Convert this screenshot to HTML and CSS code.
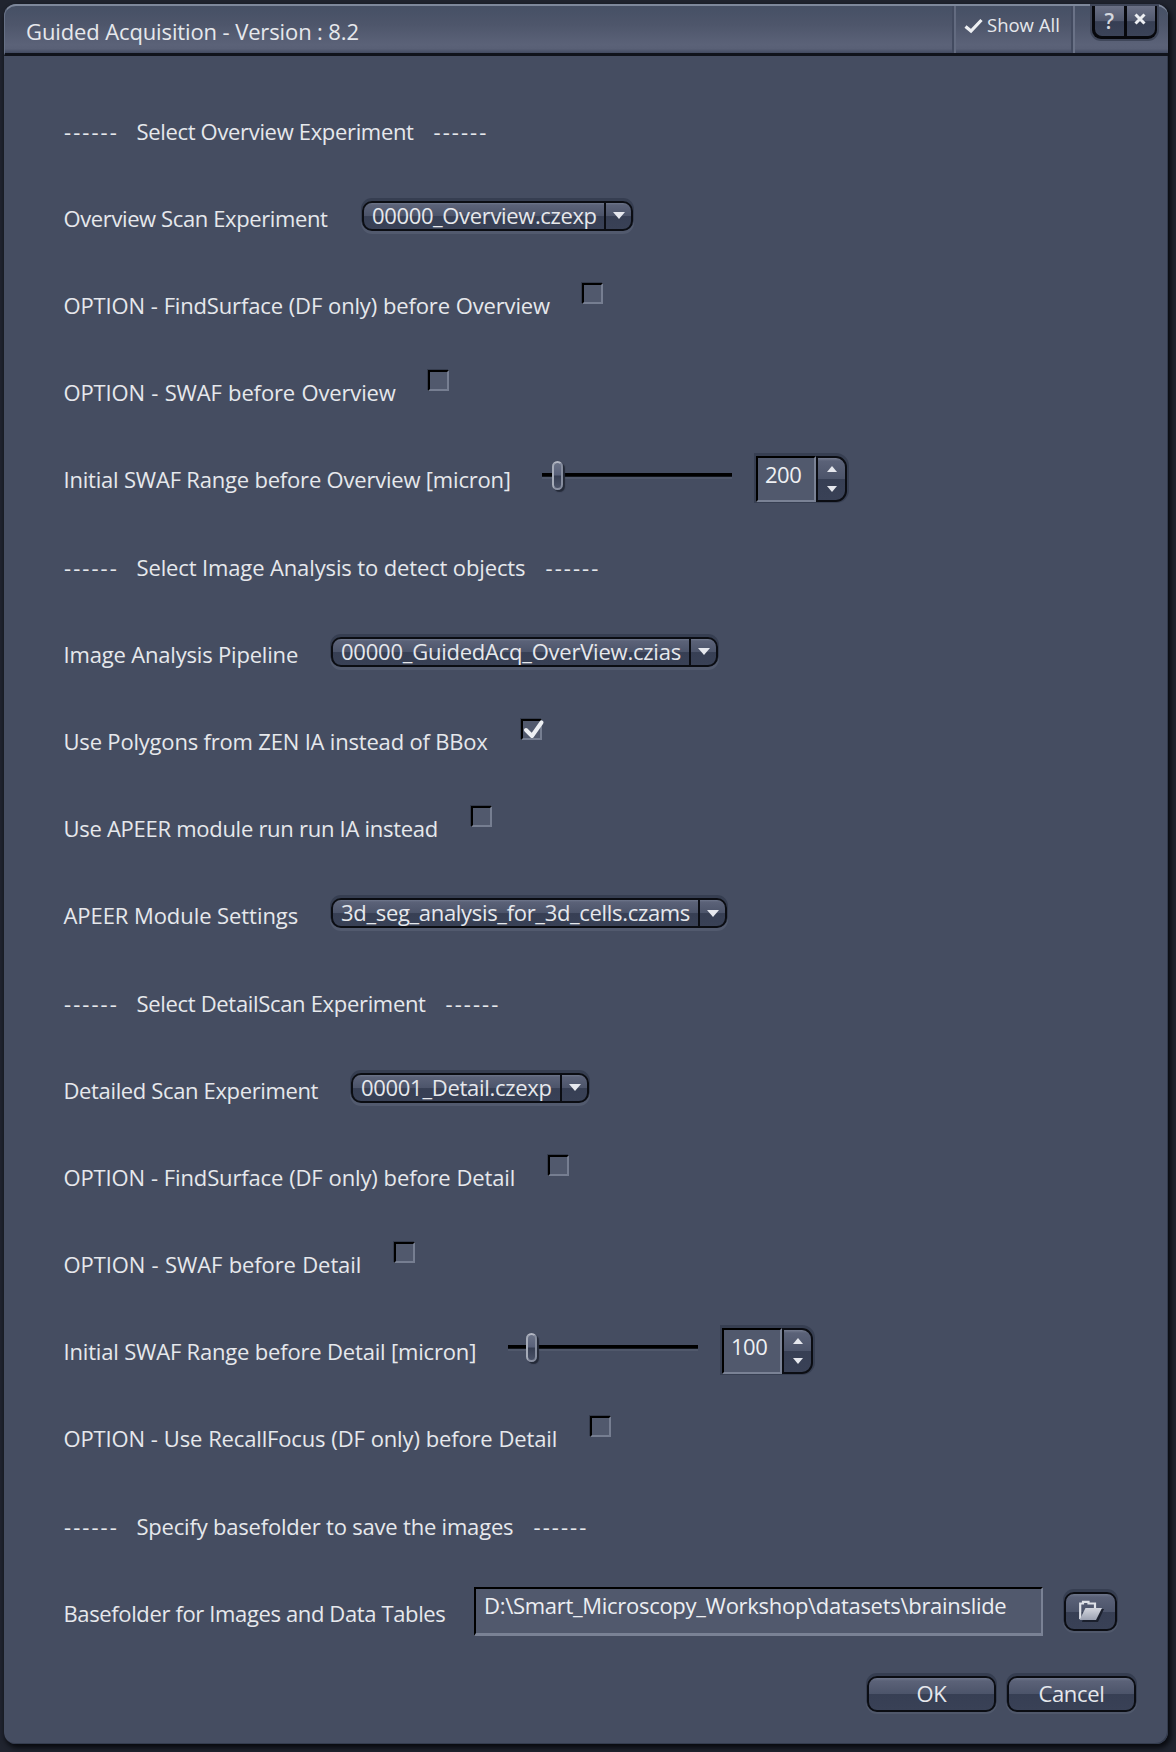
FILE: index.html
```html
<!DOCTYPE html>
<html lang="en">
<head>
<meta charset="utf-8">
<title>Guided Acquisition</title>
<link rel="stylesheet" href="styles.css">
</head>
<body>
<main class="window">
  <header class="titlebar">
    <h1 class="title">Guided Acquisition - Version : 8.2</h1>
    <div class="showall">
      <svg width="20" height="16" viewBox="0 0 20 16"><path d="M1.500 8.500 7 13 17.500 2" fill="none" stroke="#eef0f3" stroke-width="3.200"/></svg>
      <span>Show All</span>
    </div>
    <div class="winbtns">
      <button class="winbtn help">?</button>
      <button class="winbtn close"><svg width="12" height="12" viewBox="0 0 12 12"><path d="M1.500 1.500 10.500 10.500M10.500 1.500 1.500 10.500" stroke="#eceef2" stroke-width="3"/></svg></button>
    </div>
  </header>

  <section class="form">
    <div class="row section"><span class="dashes">------</span><span class="label s-overview">Select Overview Experiment</span><span class="dashes">------</span></div>

    <div class="row">
      <span class="label l-ovexp">Overview Scan Experiment</span>
      <div class="combo c-ovexp"><span class="value">00000_Overview.czexp</span><span class="arrow"><i class="down"></i></span></div>
    </div>
    <div class="row"><span class="label l-ovsurface">OPTION - FindSurface (DF only) before Overview</span><span class="check"></span></div>
    <div class="row"><span class="label l-ovswaf">OPTION - SWAF before Overview</span><span class="check"></span></div>
    <div class="row">
      <span class="label l-ovrange">Initial SWAF Range before Overview [micron]</span>
      <div class="slider"><span class="thumb t-200"></span></div>
      <div class="spin"><span class="num">200</span><span class="steps"><i class="up"></i><i class="down"></i></span></div>
    </div>

    <div class="row section"><span class="dashes">------</span><span class="label s-analysis">Select Image Analysis to detect objects</span><span class="dashes">------</span></div>

    <div class="row">
      <span class="label l-pipeline">Image Analysis Pipeline</span>
      <div class="combo c-pipeline"><span class="value">00000_GuidedAcq_OverView.czias</span><span class="arrow"><i class="down"></i></span></div>
    </div>
    <div class="row"><span class="label l-polygons">Use Polygons from ZEN IA instead of BBox</span><span class="check on"><svg width="20" height="18" viewBox="0 0 20 18"><path d="M2 9 8 15 17.500 1.500" fill="none" stroke="#eceef2" stroke-width="4" stroke-linejoin="round" stroke-linecap="round"/></svg></span></div>
    <div class="row"><span class="label l-apeer">Use APEER module run run IA instead</span><span class="check"></span></div>
    <div class="row">
      <span class="label l-module">APEER Module Settings</span>
      <div class="combo c-module"><span class="value">3d_seg_analysis_for_3d_cells.czams</span><span class="arrow"><i class="down"></i></span></div>
    </div>

    <div class="row section"><span class="dashes">------</span><span class="label s-detail">Select DetailScan Experiment</span><span class="dashes">------</span></div>

    <div class="row">
      <span class="label l-dtexp">Detailed Scan Experiment</span>
      <div class="combo c-dtexp"><span class="value">00001_Detail.czexp</span><span class="arrow"><i class="down"></i></span></div>
    </div>
    <div class="row"><span class="label l-dtsurface">OPTION - FindSurface (DF only) before Detail</span><span class="check"></span></div>
    <div class="row"><span class="label l-dtswaf">OPTION - SWAF before Detail</span><span class="check"></span></div>
    <div class="row">
      <span class="label l-dtrange">Initial SWAF Range before Detail [micron]</span>
      <div class="slider"><span class="thumb t-100"></span></div>
      <div class="spin"><span class="num">100</span><span class="steps"><i class="up"></i><i class="down"></i></span></div>
    </div>
    <div class="row"><span class="label l-recall">OPTION - Use RecallFocus (DF only) before Detail</span><span class="check"></span></div>

    <div class="row section"><span class="dashes">------</span><span class="label s-folder">Specify basefolder to save the images</span><span class="dashes">------</span></div>

    <div class="row">
      <span class="label l-folder">Basefolder for Images and Data Tables</span>
      <div class="path">D:\Smart_Microscopy_Workshop\datasets\brainslide</div>
      <button class="btn browse">
        <svg width="26" height="22" viewBox="0 0 26 22">
          <defs><linearGradient id="flap" x1="0" y1="0" x2="0" y2="1"><stop offset="0" stop-color="#d3d6de"/><stop offset="1" stop-color="#9ba1b1"/></linearGradient></defs>
          <path d="M8 9H26L20 22H4z" fill="#1b202d"/>
          <path d="M2.200 19V3.500H5V1.800H10.500V3.500H17V8" fill="none" stroke="#dfe2e8" stroke-width="2.200"/>
          <path d="M7.500 8H24L18 20H1.500z" fill="url(#flap)"/>
        </svg>
      </button>
    </div>
  </section>

  <footer class="actions">
    <button class="btn">OK</button>
    <button class="btn">Cancel</button>
  </footer>
</main>
</body>
</html>
```
FILE: styles.css
```css
* { box-sizing: border-box; }

body {
  margin: 0;
  height: 1752px;
  padding: 4px 8px 8px 4px;
  background: #20242f;
  color: #e6e8ec;
  font: 22px/30px "Open Sans", "Noto Sans", sans-serif;
  overflow: hidden;
}

button {
  padding: 0;
  border: 0;
  color: inherit;
  font: inherit;
}

.window {
  height: 1740px;
  background: #454d61;
  border-radius: 12px;
  box-shadow: 2px 3px 5px 1px #090b10, inset -1px -1px 0 #333b4d;
}

/* title bar */
.titlebar {
  display: flex;
  height: 52px;
  padding-left: 21px;
  border-top: 2px solid #7e889b;
  border-left: 1px solid #667086;
  border-bottom: 3px solid #10131b;
  border-radius: 12px 12px 0 0;
  background: linear-gradient(#465065, #4e566b 40%, #5b6278 82%, #596076 91%, #424a60);
}
.title {
  flex: 1;
  margin: 10px 0 0;
  font-size: 22px;
  font-weight: 400;
  letter-spacing: -0.12px;
  white-space: pre;
}
.showall {
  display: flex;
  width: 123px;
  padding: 0 0 0 7px;
  border-left: 2px solid #434b60;
  border-right: 2px solid #6a7287;
  box-shadow: inset 2px 0 0 #636b80, inset -2px 0 0 #434b60;
  font-size: 18.5px;
}
.showall svg { margin: 12px 0 0 3px; }
.showall span { margin: 4px 0 0 3px; white-space: pre; }
.winbtns {
  display: flex;
  gap: 3px;
  width: 65px;
  height: 33px;
  margin: 0 11px 0 17px;
  padding: 0 2px 2px 3px;
  border-radius: 0 0 9px 9px;
  background: #07080d;
  box-shadow: 0 0 0 2px #3f4659;
}
.winbtn {
  display: flex;
  align-items: center;
  justify-content: center;
  flex: 1;
  height: 30px;
  background: linear-gradient(#6a7085, #51586e 50%, #363e53 52%, #3b4358);
}
.help { border-radius: 0 0 0 7px; font-size: 21px; line-height: 26px; font-weight: 600; color: #d5d8df; }
.close { border-radius: 0 0 7px 0; }
.close svg { margin: -4px 0 0 -1px; }

/* form rows */
.form { padding: 32.4px 0 0 60px; }
.row {
  display: flex;
  align-items: flex-start;
  height: 87.18px;
}
.label { flex: none; margin: 27.4px 0 0 -0.5px; white-space: pre; }
.dashes { width: 73px; margin-top: 27.4px; letter-spacing: 2.05px; }

.s-overview { width: 297px; letter-spacing: -0.33px; }
.s-analysis { width: 409px; letter-spacing: -0.13px; }
.s-detail { width: 309px; letter-spacing: -0.32px; }
.s-folder { width: 397px; letter-spacing: -0.2px; }

.l-ovexp { width: 298.5px; letter-spacing: -0.39px; }
.l-ovsurface { width: 518.5px; letter-spacing: -0.16px; word-spacing: 0.4px; }
.l-ovswaf { width: 364.5px; letter-spacing: -0.14px; word-spacing: 0.8px; }
.l-ovrange { width: 478.5px; letter-spacing: -0.2px; }
.l-pipeline { width: 267.5px; letter-spacing: -0.18px; }
.l-polygons { width: 457.5px; letter-spacing: -0.19px; }
.l-apeer { width: 407.5px; letter-spacing: -0.28px; }
.l-module { width: 267.5px; letter-spacing: -0.07px; }
.l-dtexp { width: 287.5px; letter-spacing: -0.36px; }
.l-dtsurface { width: 484.5px; letter-spacing: -0.14px; word-spacing: 0.4px; }
.l-dtswaf { width: 330.5px; letter-spacing: -0.1px; word-spacing: 0.8px; }
.l-dtrange { width: 444.5px; letter-spacing: -0.18px; }
.l-recall { width: 526.5px; letter-spacing: -0.15px; word-spacing: 0.4px; }
.l-folder { width: 410.5px; letter-spacing: -0.37px; }

/* combo boxes */
.combo {
  display: flex;
  height: 30px;
  margin-top: 25.4px;
  border: 2px solid #0b0d13;
  border-radius: 10px;
  overflow: hidden;
  background: linear-gradient(#6e768b, #5b6278 2px, #4c546a 50%, #373f54 52%, #394156);
  box-shadow: 0 -2px 0 1px #363e51, 0 2px 0 1px #525a6e;
}
.value { flex: 1; padding-left: 8px; line-height: 25px; white-space: pre; }
.arrow {
  display: flex;
  align-items: center;
  justify-content: center;
  width: 27px;
  border-left: 2px solid #0b0d13;
}
.c-ovexp { width: 271px; letter-spacing: -0.36px; }
.c-pipeline { width: 387px; letter-spacing: -0.23px; }
.c-module { width: 396px; letter-spacing: -0.32px; }
.c-dtexp { width: 238px; letter-spacing: -0.3px; }

.up, .down { width: 0; height: 0; border: 6px solid transparent; }
.down { border-top: 7px solid #e6e8ee; border-bottom: 0; }
.up { border-bottom: 7px solid #e6e8ee; border-top: 0; }

/* check boxes */
.check {
  width: 21px;
  height: 21px;
  margin-top: 20.4px;
  border: 2px solid #000;
  border-right-color: #767e91;
  border-bottom-color: #767e91;
  background: #51596d;
  box-shadow: -1px -1px 0 #353c4d;
}
.check svg { display: block; margin: 0 0 0 1px; overflow: visible; }

/* sliders */
.slider {
  width: 190px;
  height: 4px;
  margin-top: 36px;
  background: #000;
  border-bottom: 1px solid #12161c;
  box-shadow: 0 2px 0 #50586b;
}
.thumb {
  display: block;
  width: 11px;
  height: 29px;
  margin-top: -12px;
  border: 2px solid #a9aebb;
  border-color: #b3b7c3 #868d9e #8a90a1 #a5abb8;
  border-radius: 6px;
  background: linear-gradient(#6a7287, #59617a 48%, #363e52 52%, #4a5268);
  box-shadow: 2px 2px 1px #242a38;
}
.t-200 { margin-left: 10px; }
.t-100 { margin-left: 18px; }

/* number fields */
.spin {
  display: flex;
  width: 91px;
  height: 46px;
  margin: 19px 0 0 24px;
  border-radius: 0 11px 11px 0;
  box-shadow: 0 -1px 0 2px #373f52;
}
.num {
  width: 60px;
  padding: 2px 0 0 7px;
  border: 2px solid #000;
  border-right-color: #7a8295;
  border-bottom-color: #7a8295;
  background: #51596d;
  line-height: 28px;
  color: #eef0f3;
  letter-spacing: -0.5px;
}
.steps {
  display: flex;
  flex-direction: column;
  align-items: center;
  justify-content: center;
  gap: 14px;
  flex: 1;
  border: 2px solid #0b0d13;
  border-radius: 0 11px 11px 0;
  background: linear-gradient(#757c90, #5b6278 3px, #4c546a 50%, #373f54 51%, #394156);
}
.steps i { border-left-width: 5px; border-right-width: 5px; }
.steps .up { border-bottom-width: 6px; }
.steps .down { border-top-width: 6px; }

/* base folder */
.path {
  width: 569px;
  height: 49px;
  margin-top: 16.5px;
  padding: 1px 0 0 8px;
  border: 2px solid #000;
  border-right-color: #7a8295;
  border-bottom: 3px solid #7a8295;
  background: #51596d;
  line-height: 30px;
  letter-spacing: -0.29px;
  white-space: pre;
  color: #eceef2;
}

.btn {
  width: 129px;
  height: 36px;
  padding-bottom: 3px;
  border: 2px solid #0b0d13;
  border-radius: 10px;
  background: linear-gradient(#6e768b, #5b6278 3px, #4c546a 50%, #373f54 51%, #394156);
  box-shadow: 0 -2px 0 1px #363e51, 0 1px 0 1px #50586b;
  line-height: 28px;
  letter-spacing: -0.3px;
}
.browse {
  display: flex;
  align-items: center;
  justify-content: center;
  width: 53px;
  height: 39px;
  margin: 21.5px 0 0 21px;
  padding: 0 0 1px;
}

.actions {
  display: flex;
  justify-content: flex-end;
  gap: 11px;
  padding: 19px 32px 0 0;
}
```
